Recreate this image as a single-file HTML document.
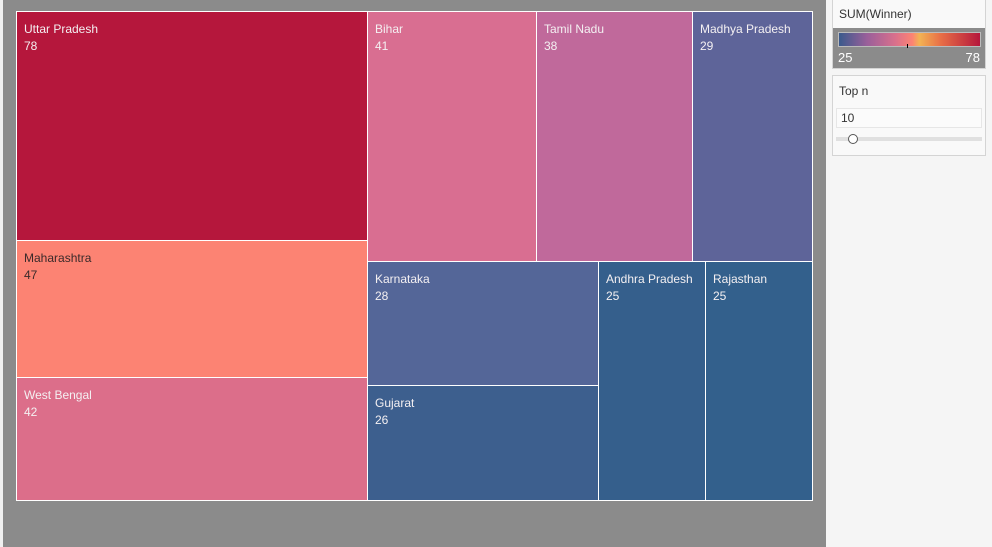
<!DOCTYPE html>
<html><head><style>
*{margin:0;padding:0;box-sizing:border-box}
body{width:992px;height:547px;background:#f0f0f0;position:relative;overflow:hidden;font-family:"Liberation Sans",sans-serif}
#g{position:absolute;left:3px;top:0;width:823px;height:547px;background:#8b8b8b}
.r{position:absolute;border:1px solid #fff;color:#f4f0f2;font-size:12px;line-height:17px;padding:9px 0 0 7px}
#side{position:absolute;left:826px;top:0;width:166px;height:547px;background:#f5f5f5}
.box{position:absolute;left:6px;width:154px;background:#f9f9f9;border:1px solid #d4d4d4}
</style></head><body>
<div id="g"></div>
<div class="r" style="left:16px;top:11px;width:352px;height:230px;background:#b5173c">Uttar Pradesh<br>78</div>
<div class="r" style="left:16px;top:240px;width:352px;height:138px;background:#fc8373;color:#3a2a2a">Maharashtra<br>47</div>
<div class="r" style="left:16px;top:377px;width:352px;height:124px;background:#dc6e8a">West Bengal<br>42</div>
<div class="r" style="left:367px;top:11px;width:170px;height:251px;background:#d96e91">Bihar<br>41</div>
<div class="r" style="left:536px;top:11px;width:157px;height:251px;background:#c0699b">Tamil Nadu<br>38</div>
<div class="r" style="left:692px;top:11px;width:121px;height:251px;background:#5e6499">Madhya Pradesh<br>29</div>
<div class="r" style="left:367px;top:261px;width:232px;height:125px;background:#546698">Karnataka<br>28</div>
<div class="r" style="left:367px;top:385px;width:232px;height:116px;background:#3d5f8e">Gujarat<br>26</div>
<div class="r" style="left:598px;top:261px;width:108px;height:240px;background:#355f8c">Andhra Pradesh<br>25</div>
<div class="r" style="left:705px;top:261px;width:108px;height:240px;background:#33608c">Rajasthan<br>25</div>
<div id="side">
<div class="box" style="top:-1px;height:70px">
<div style="position:absolute;left:6px;top:7px;font-size:12px;color:#333">SUM(Winner)</div>
<div style="position:absolute;left:0;top:28px;width:152px;height:40px;background:#8b8b8b">
<div style="position:absolute;left:5px;top:4px;width:143px;height:15px;border:1px solid #bbb;background:linear-gradient(90deg,#3a5a8c,#9a5f9a 20%,#d9708c 40%,#fc8373 52%,#f2b354 57%,#e86f47 72%,#b5173c)"></div>
<div style="position:absolute;left:74px;top:16px;width:1px;height:4px;background:#000"></div>
<div style="position:absolute;left:5px;top:22px;color:#fff;font-size:13px">25</div>
<div style="position:absolute;right:5px;top:22px;color:#fff;font-size:13px">78</div>
</div></div>
<div class="box" style="top:75px;height:81px">
<div style="position:absolute;left:6px;top:8px;font-size:12px;color:#333">Top n</div>
<div style="position:absolute;left:3px;top:32px;width:146px;height:20px;border:1px solid #e6e6e6;background:#fbfbfb;font-size:12px;color:#333;padding:2px 0 0 4px">10</div>
<div style="position:absolute;left:3px;top:61px;width:146px;height:4px;background:#e0e0e0"></div>
<div style="position:absolute;left:15px;top:58px;width:10px;height:10px;border-radius:50%;border:1.5px solid #555;background:#fff"></div>
</div>
</div>
</body></html>
